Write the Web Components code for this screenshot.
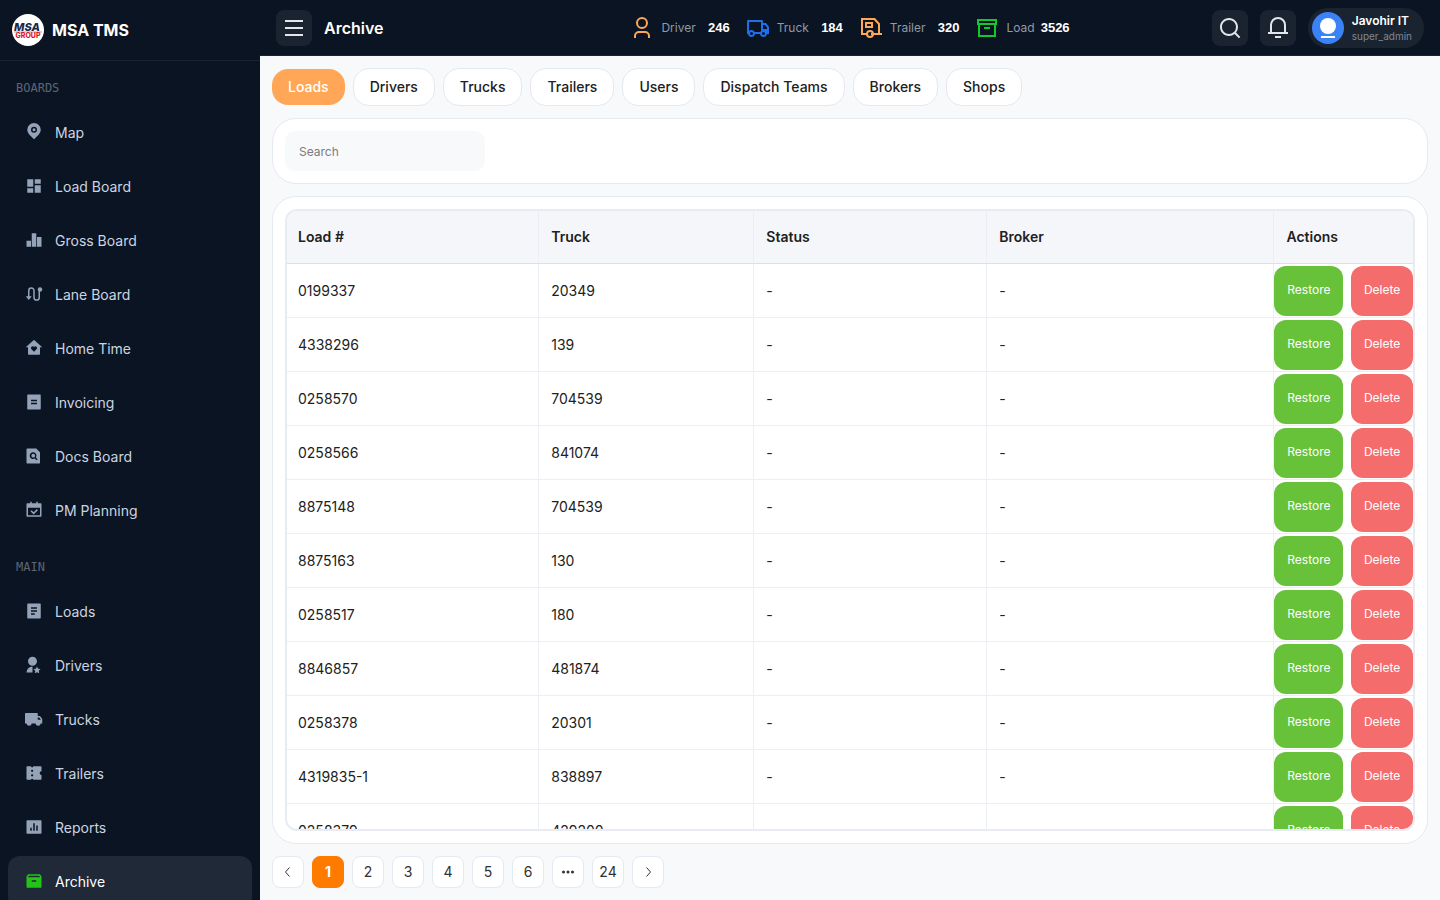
<!DOCTYPE html>
<html lang="en">
<head>
<meta charset="utf-8">
<title>Archive - MSA TMS</title>
<style>
html, body { margin: 0; height: 100%; }
body { font-family: Inter, "Liberation Sans", sans-serif; font-size: 14px; color: #212121; background: #f8f9fb; overflow: hidden; }
</style>
</head>
<body>
<tms-app></tms-app>
<script>
const ICONS = {
  map: '<path fill-rule="evenodd" d="M18.4 15.4 12 21.7l-6.400-6.300a9 9 0 1 1 12.800 0zM12 13a4 4 0 1 0 0-8 4 4 0 0 0 0 8z"/><circle cx="12" cy="9" r="2"/>',
  load: '<path d="M3 3h8v10H3zM13 3h8v6h-8zM13 11h8v10h-8zM3 15h8v6H3z"/>',
  gross: '<path d="M2 13h6v8H2zM9 3h6v18H9zM16 8h6v13h-6z"/>',
  lane: '<path d="M5 16V7.500a3.500 3.500 0 0 1 7 0v9a3.500 3.500 0 0 0 7 0V7" fill="none" stroke="currentColor" stroke-width="2"/><path d="M1 15h8l-4 5z"/><circle cx="20" cy="6" r="3"/>',
  home: '<path fill-rule="evenodd" d="M20 20a1 1 0 0 1-1 1H5a1 1 0 0 1-1-1v-9H1l10.327-9.388a1 1 0 0 1 1.346 0L23 11h-3v9zm-8-3 3.359-3.359a2.250 2.250 0 1 0-3.182-3.182l-.177.177-.177-.177a2.250 2.250 0 1 0-3.182 3.182L12 17z"/>',
  invoice: '<path fill-rule="evenodd" d="M4 2h16a1 1 0 0 1 1 1v18a1 1 0 0 1-1 1H4a1 1 0 0 1-1-1V3a1 1 0 0 1 1-1zM8 9v2h8V9zm0 4v2h8v-2z"/>',
  docs: '<path fill-rule="evenodd" d="M3 2h12l5 5v14a1 1 0 0 1-1 1H3a1 1 0 0 1-1-1V3a1 1 0 0 1 1-1zM11 7a4.500 4.500 0 1 0 2 8.400l2.400 2.400 1.400-1.400-2.300-2.400A4.500 4.500 0 0 0 11 7Zm0 2a2.500 2.500 0 1 1 0 5 2.500 2.500 0 0 1 0-5Z"/>',
  plan: '<path fill-rule="evenodd" d="M7 1h2v2h6V1h2v2h4a1 1 0 0 1 1 1v16a1 1 0 0 1-1 1H3a1 1 0 0 1-1-1V4a1 1 0 0 1 1-1h4V1ZM4 9v10h16V9H4Z"/><path d="m8 13 3.500 3.500 5-5" fill="none" stroke="currentColor" stroke-width="2"/>',
  loads: '<path fill-rule="evenodd" d="M4 2h16a1 1 0 0 1 1 1v18a1 1 0 0 1-1 1H4a1 1 0 0 1-1-1V3a1 1 0 0 1 1-1zM8 7v2h8V7zm0 4v2h8v-2zm0 4v2h5v-2z"/>',
  drivers: '<path transform="translate(-2 0)" d="M12 14v8H4a8 8 0 0 1 8-8zm6 7.500-2.939 1.545.561-3.272-2.377-2.318 3.286-.478L18 14l1.470 2.977 3.285.478-2.377 2.318.560 3.272L18 21.500zM12 13c-3.315 0-6-2.685-6-6s2.685-6 6-6 6 2.685 6 6-2.685 6-6 6z"/>',
  truck: '<path fill-rule="evenodd" d="M17 8h3l3 4.056V18h-2.035a3.500 3.500 0 0 1-6.930 0h-5.070a3.500 3.500 0 0 1-6.930 0H0V5a1 1 0 0 1 1-1h15a1 1 0 0 1 1 1v3zm0 2v3h4v-.285L18.992 10H17z"/>',
  trailers: '<path fill-rule="evenodd" d="M11 21a1.500 1.500 0 0 0-3 0H3a1 1 0 0 1-1-1V4a1 1 0 0 1 1-1h5a1.500 1.500 0 0 0 3 0h10a1 1 0 0 1 1 1v5.500a2.500 2.500 0 1 0 0 5V20a1 1 0 0 1-1 1H11zM9.500 10.500a1.500 1.500 0 1 0 0-3 1.500 1.500 0 0 0 0 3zm0 6a1.500 1.500 0 1 0 0-3 1.500 1.500 0 0 0 0 3z"/>',
  reports: '<path fill-rule="evenodd" d="M3 3h18a1 1 0 0 1 1 1v16a1 1 0 0 1-1 1H3a1 1 0 0 1-1-1V4a1 1 0 0 1 1-1zm4 10v4h2v-4H7zm4-6v10h2V7h-2zm4 3v7h2v-7h-2z"/>',
  archive: '<path fill-rule="evenodd" d="M4 3h16l2 3v14a1 1 0 0 1-1 1H3a1 1 0 0 1-1-1V6l2-3Zm1 2-1 2h16l-1-2H5Zm4 6v2h6v-2H9Z"/>',
  menu: '<path d="M3 4h18v2H3zM3 11h18v2H3zM3 18h18v2H3z"/>',
  user: '<path fill-rule="evenodd" d="M20 22h-2v-2a3 3 0 0 0-3-3H9a3 3 0 0 0-3 3v2H4v-2a5 5 0 0 1 5-5h6a5 5 0 0 1 5 5v2zm-8-9a6 6 0 1 1 0-12 6 6 0 0 1 0 12zm0-2a4 4 0 1 0 0-8 4 4 0 0 0 0 8z"/>',
  van: '<path fill-rule="evenodd" d="M8.965 18a3.500 3.500 0 0 1-6.930 0H1V5a1 1 0 0 1 1-1h14a1 1 0 0 1 1 1v2h3l3 4.056V18h-2.035a3.500 3.500 0 0 1-6.930 0h-5.070zM15 6H3v9.050a3.500 3.500 0 0 1 5.663.950h5.674c.168-.353.393-.674.663-.950V6zm2 7h4v-1.285L18.992 9H17v4zm.500 6a1.500 1.500 0 1 0 0-3 1.500 1.500 0 0 0 0 3zM7 17.500a1.500 1.500 0 1 0-3 0 1.500 1.500 0 0 0 3 0z"/>',
  camper: '<g fill="none" stroke="currentColor" stroke-width="2"><path d="M8 18H3V3h12.500l4.500 5v10h-8M19 18h4"/><path d="M7 7h6v4H7z"/><circle cx="11" cy="18" r="3"/></g>',
  box: '<path fill-rule="evenodd" d="M3 9H2V3h20v6h-1v12H3V9zm16 0H5v10h14V9zM4 5v2h16V5H4zm5 6h6v2H9v-2z"/>',
  search: '<path fill-rule="evenodd" d="m18.031 16.617 4.283 4.282-1.415 1.415-4.282-4.283A8.960 8.960 0 0 1 11 20c-4.968 0-9-4.032-9-9s4.032-9 9-9 9 4.032 9 9a8.960 8.960 0 0 1-1.969 5.617zm-2.006-.742A6.977 6.977 0 0 0 18 11c0-3.868-3.133-7-7-7-3.868 0-7 3.132-7 7 0 3.867 3.132 7 7 7a6.977 6.977 0 0 0 4.875-1.975l.150-.150z"/>',
  bell: '<path fill-rule="evenodd" d="M20 16h2v2H2v-2h2V9a8 8 0 1 1 16 0v7zm-2 0V9A6 6 0 1 0 6 9v7h12zm-9 4h6v2H9v-2z"/>',
  prev: '<path d="m15 3-8 9 8 9" fill="none" stroke="currentColor" stroke-width="2"/>',
  next: '<path d="m9 3 8 9-8 9" fill="none" stroke="currentColor" stroke-width="2"/>',
  dots: '<circle cx="3" cy="12" r="3"/><circle cx="12" cy="12" r="3"/><circle cx="21" cy="12" r="3"/>'
};

class TmsElement extends HTMLElement {
  connectedCallback() {
    if (!this.shadowRoot) {
      this.attachShadow({ mode: 'open' }).innerHTML =
        '<style>*{box-sizing:border-box}:host{display:block;box-sizing:border-box}:host([hidden]){display:none}</style>' + this.render();
    }
  }
}

customElements.define('tms-icon', class extends TmsElement {
  render() {
    return `<style>:host{flex:none;width:18px;height:18px}svg{display:block;width:100%;height:100%}</style>
    <svg viewBox="0 0 24 24" fill="currentColor" aria-hidden="true">${ICONS[this.getAttribute('name')]}</svg>`;
  }
});

customElements.define('tms-logo', class extends TmsElement {
  render() {
    return `<style>:host{width:32px;height:32px;flex:none}svg{display:block}text{font-family:Inter,sans-serif;text-anchor:middle}</style>
    <svg width="32" height="32" viewBox="0 0 32 32">
      <circle cx="16" cy="16" r="16" fill="#fff"/>
      <text x="15" y="17" font-size="11" font-weight="800" font-style="italic" fill="#1c2748">MSA</text>
      <path d="M2 18h28" stroke="#1c2748" stroke-width="1" opacity=".4"/>
      <text x="16" y="24" font-size="7" font-weight="800" fill="#e8141c">GROUP</text>
    </svg>`;
  }
});

customElements.define('nav-item', class extends TmsElement {
  render() {
    return `<style>
      a{display:flex;align-items:center;gap:12px;height:52px;padding:0 17px;border-radius:12px;color:#cbd5e1;text-decoration:none;font-size:14px;line-height:20px}
      tms-icon{color:#94a3b8;margin-bottom:2px}
      :host([active]) a{background:#1f2937;color:#fff}
      :host([active]) tms-icon{color:#22c516}
    </style><a href="#"><tms-icon name="${this.getAttribute('icon')}"></tms-icon><slot></slot></a>`;
  }
});

customElements.define('nav-group', class extends TmsElement {
  render() {
    return `<style>
      h2{margin:0;padding:17px 8px 9px;font:400 12px/20px "DejaVu Sans Mono",monospace;color:#5d6675}
      nav{display:flex;flex-direction:column;gap:2px}
    </style><h2>${this.getAttribute('label')}</h2><nav aria-label="${this.getAttribute('label')}"><slot></slot></nav>`;
  }
});

customElements.define('app-sidebar', class extends TmsElement {
  render() {
    return `<style>
      :host{background:#0b1422;overflow:hidden}
      .brand{display:flex;align-items:center;gap:8px;height:61px;padding:0 12px;border-bottom:1px solid #1b2431;color:#fff;font-size:16px;line-height:24px;font-weight:700}
      .list{display:flex;flex-direction:column;padding:0 8px;gap:3px}
    </style>
    <div class="brand"><tms-logo></tms-logo><span>MSA TMS</span></div>
    <div class="list">
      <nav-group label="BOARDS">
        <nav-item icon="map">Map</nav-item><nav-item icon="load">Load Board</nav-item><nav-item icon="gross">Gross Board</nav-item>
        <nav-item icon="lane">Lane Board</nav-item><nav-item icon="home">Home Time</nav-item><nav-item icon="invoice">Invoicing</nav-item>
        <nav-item icon="docs">Docs Board</nav-item><nav-item icon="plan">PM Planning</nav-item>
      </nav-group>
      <nav-group label="MAIN">
        <nav-item icon="loads">Loads</nav-item><nav-item icon="drivers">Drivers</nav-item><nav-item icon="truck">Trucks</nav-item>
        <nav-item icon="trailers">Trailers</nav-item><nav-item icon="reports">Reports</nav-item><nav-item icon="archive" active>Archive</nav-item>
      </nav-group>
    </div>`;
  }
});

customElements.define('stat-item', class extends TmsElement {
  render() {
    return `<style>
      :host{display:flex;align-items:center;gap:6px;font-size:12px;line-height:16px;color:#9099a5}
      tms-icon{width:24px;height:24px;margin-right:1px;color:${this.getAttribute('color')}}
      b{min-width:28px;text-align:right;color:#fff;font:700 13px/16px "Liberation Sans",Arial,sans-serif}
    </style><tms-icon name="${this.getAttribute('icon')}"></tms-icon><span><slot></slot></span><b>${this.getAttribute('value')}</b>`;
  }
});

customElements.define('icon-button', class extends TmsElement {
  render() {
    return `<style>
      button{display:grid;place-items:center;width:36px;height:36px;padding:0;border:0;border-radius:8px;background:#1a2330;color:#e2e5e9}
      tms-icon{width:24px;height:24px}
    </style><button type="button" aria-label="${this.getAttribute('label')}"><tms-icon name="${this.getAttribute('icon')}"></tms-icon></button>`;
  }
});

customElements.define('user-pill', class extends TmsElement {
  render() {
    return `<style>
      button{display:flex;align-items:center;gap:8px;height:40px;padding:0 12px 0 4px;border:0;border-radius:20px;background:#1a2330;font-family:inherit;text-align:left}
      svg{flex:none}
      span{display:block}
      .name{color:#fff;font-size:12px;line-height:16px;font-weight:600}
      .role{color:#7f8894;font-size:10px;line-height:14px}
    </style>
    <button type="button">
      <svg width="32" height="32" viewBox="0 0 32 32" aria-hidden="true"><circle cx="16" cy="16" r="16" fill="#3b82f6"/><circle cx="16" cy="14" r="8" fill="#fff"/><path d="M9 25h14" stroke="#fff" stroke-width="2"/></svg>
      <span><span class="name">Javohir IT</span><span class="role">super_admin</span></span>
    </button>`;
  }
});

customElements.define('app-header', class extends TmsElement {
  render() {
    return `<style>
      :host{display:grid;grid-template-columns:1fr auto 1fr;align-items:center;height:56px;padding:0 16px;background:#0b1422;border-bottom:1px solid #1b2431}
      .left,.right{display:flex;align-items:center;gap:12px}
      .right{justify-content:flex-end}
      .stats{display:flex;gap:16px}
      h1{margin:0;color:#fff;font-size:16px;line-height:24px;font-weight:600}
    </style>
    <div class="left"><icon-button icon="menu" label="Toggle menu"></icon-button><h1>Archive</h1></div>
    <div class="stats">
      <stat-item icon="user" color="#ffa657" value="246">Driver</stat-item>
      <stat-item icon="van" color="#1f6feb" value="184">Truck</stat-item>
      <stat-item icon="camper" color="#ffa657" value="320">Trailer</stat-item>
      <stat-item icon="box" color="#12c929" value="3526">Load</stat-item>
    </div>
    <div class="right"><icon-button icon="search" label="Search"></icon-button><icon-button icon="bell" label="Notifications"></icon-button><user-pill></user-pill></div>`;
  }
});

customElements.define('tab-pill', class extends TmsElement {
  render() {
    return `<style>
      button{display:block;height:38px;padding:0 16px;border:1px solid #e5e9ef;border-radius:16px;background:#fff;color:#212121;font:500 14px/20px Inter,sans-serif}
      :host([active]) button{height:36px;border:0;background:#ffa657;color:#fff}
    </style><button type="button"><slot></slot></button>`;
  }
});

customElements.define('tms-card', class extends TmsElement {
  render() {
    return `<style>:host{display:flex;flex-direction:column;padding:12px;border:1px solid #e5eaf0;border-radius:24px;background:#fff}</style><slot></slot>`;
  }
});

customElements.define('search-field', class extends TmsElement {
  render() {
    return `<style>
      input{display:block;width:200px;height:40px;padding:0 14px;border:0;border-radius:10px;background:#f8f9fb;color:#212121;font:400 12px/16px Inter,sans-serif}
      input::placeholder{color:#7b7b7b;opacity:1}
    </style><input type="text" placeholder="Search" aria-label="Search">`;
  }
});

customElements.define('action-button', class extends TmsElement {
  render() {
    return `<style>
      button{display:block;width:100%;height:50px;padding:0 0 2px;border:0;border-radius:12px;background:#67c23a;color:#fff;font:400 12px/16px Inter,sans-serif}
      :host([kind=danger]) button{background:#f56c6c}
    </style><button type="button"><slot></slot></button>`;
  }
});

customElements.define('archive-table', class extends TmsElement {
  render() {
    const rows = [['0199337','20349'],['4338296','139'],['0258570','704539'],['0258566','841074'],['8875148','704539'],['8875163','130'],['0258517','180'],['8846857','481874'],['0258378','20301'],['4319835-1','838897'],['0258379','429200']];
    return `<style>
      :host{flex:1;min-height:0;overflow:hidden;border:2px solid #e8ecf2;border-radius:12px}
      table{width:100%;table-layout:fixed;border-collapse:separate;border-spacing:0;font-size:14px;line-height:20px}
      .c1{width:22.4%}.c2{width:19.1%}.c3{width:20.7%}.c4{width:25.5%}
      th,td{height:54px;padding:0 11px;border-bottom:1px solid #ebeef5;border-right:1px solid #ebeef5;text-align:left;font-weight:400}
      th{height:53px;background:#f5f6fa;border-bottom-color:#dcdfe6;font-weight:600}
      th+th,td+td{padding-left:12px}
      th:last-child,td:last-child{border-right:0}
      td.act{padding:0}
      .pair{display:grid;grid-template-columns:69fr 62fr;gap:8px}
    </style>
    <table>
      <colgroup><col class="c1"><col class="c2"><col class="c3"><col class="c4"><col></colgroup>
      <thead><tr><th scope="col">Load #</th><th scope="col">Truck</th><th scope="col">Status</th><th scope="col">Broker</th><th scope="col">Actions</th></tr></thead>
      <tbody>${rows.map(([l, t]) => `<tr><td>${l}</td><td>${t}</td><td>-</td><td>-</td><td class="act"><div class="pair"><action-button>Restore</action-button><action-button kind="danger">Delete</action-button></div></td></tr>`).join('')}</tbody>
    </table>`;
  }
});

customElements.define('page-nav', class extends TmsElement {
  render() {
    const btn = (c, extra = '') => `<button type="button" ${extra}>${c}</button>`;
    const ico = n => `<tms-icon name="${n}"></tms-icon>`;
    return `<style>
      nav{display:flex;gap:8px}
      button{display:grid;place-items:center;width:32px;height:32px;padding:0;border:1px solid #e5eaf0;border-radius:8px;background:#fff;color:#303133;font:400 14px/20px Inter,sans-serif}
      button[aria-current]{border-color:#ff7a00;background:#ff7a00;color:#fff;font-weight:700}
      tms-icon{width:12px;height:12px}
    </style><nav aria-label="Pagination">${btn(ico('prev'), 'aria-label="Previous page"')}${btn('1', 'aria-current="page"')}${[2,3,4,5,6].map(n => btn(n)).join('')}${btn(ico('dots'), 'aria-label="More pages"')}${btn('24')}${btn(ico('next'), 'aria-label="Next page"')}</nav>`;
  }
});

customElements.define('tms-app', class extends TmsElement {
  render() {
    return `<style>
      :host{display:grid;grid-template-columns:260px minmax(0,1fr);height:100vh}
      .main{display:flex;flex-direction:column;min-height:0}
      main{flex:1;min-height:0;display:flex;flex-direction:column;gap:12px;padding:12px}
      .tabs{display:flex;align-items:center;gap:8px}
      .grow{flex:1;min-height:0}
    </style>
    <app-sidebar></app-sidebar>
    <div class="main">
      <app-header></app-header>
      <main>
        <div class="tabs"><tab-pill active>Loads</tab-pill><tab-pill>Drivers</tab-pill><tab-pill>Trucks</tab-pill><tab-pill>Trailers</tab-pill><tab-pill>Users</tab-pill><tab-pill>Dispatch Teams</tab-pill><tab-pill>Brokers</tab-pill><tab-pill>Shops</tab-pill></div>
        <tms-card><search-field></search-field></tms-card>
        <tms-card class="grow"><archive-table></archive-table></tms-card>
        <page-nav></page-nav>
      </main>
    </div>`;
  }
});
</script>
</body>
</html>
